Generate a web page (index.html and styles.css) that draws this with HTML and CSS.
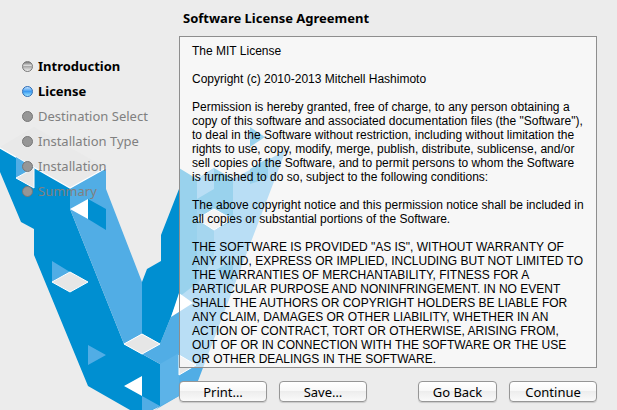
FILE: index.html
```html
<!DOCTYPE html>
<html lang="en">
<head>
<meta charset="utf-8">
<title>Software License Agreement</title>
<link rel="stylesheet" href="styles.css">
</head>
<body>
<svg class="art" width="300" height="290" viewBox="0 120 300 290" aria-hidden="true">
  <path fill="#e9e9e9" d="M0 147L34 127L106 168L70 188Z"/>
  <path fill="#008fd1" d="M0 148L70 188V209L124 344L142 354L160 364V406L152 410H130L88 386L34 255V229L21 222L0 172Z"/>
  <path fill="#51ade5" d="M70 188L106 168V189L142 282V334L124 344L70 209Z"/>
  <path fill="none" stroke="#fff" stroke-width="1.2" d="M0 148L70 188L106 168"/>
  <path fill="#51ade5" d="M16 157L34 168L16 178ZM52 261L70 272L52 282ZM88 345L106 355L88 365ZM142 396L160 406L152 410H142Z"/>
  <path fill="#008fd1" d="M88 199L106 209V230L88 219Z"/>
  <path fill="#fff" d="M70 209L88 199V219ZM124 386L142 376V396Z"/>
  <path fill="#51ade5" d="M179 179L233 179L286 150L198 381L179 396L155 410L160 406V364L142 354L160 344L179 297Z"/>
  <path fill="#008fd1" d="M142 282L147 269L161 261V235L179 189V168L197 179L214 168L233 179V221L214 230V255L197 283L179 297L160 344L142 334Z"/>
  <path fill="#1f9ad8" d="M197 209L214 219V258L197 285Z"/>
  <path fill="#5cb3e8" d="M160 364L179 353V396L160 406Z"/>
  <path fill="#008fd1" d="M250 127L265 137L250 147ZM250 169L268 158V178L250 184ZM216 270L233 260V281Z"/>
  <path fill="#51ade5" d="M197 179V199L214 189V168Z"/>
  <path fill="#e6e6e6" stroke="#fff" d="M16 178L34 168V188ZM52 282L70 272L88 282L70 292ZM124 344L142 334L160 344L142 354ZM197 219L214 209L232 219L214 230ZM179 355L196 365L179 375Z"/>
  <path fill="#fff" d="M179 293L193 303L171 317Z"/>
</svg>
<main class="installer">
  <nav class="sidebar" aria-label="Installation steps">
    <ol class="steps">
      <li class="step done">Introduction</li>
      <li class="step current" aria-current="step">License</li>
      <li class="step">Destination Select</li>
      <li class="step">Installation Type</li>
      <li class="step">Installation</li>
      <li class="step">Summary</li>
    </ol>
  </nav>
  <section class="content">
    <h1 class="title">Software License Agreement</h1>
    <article class="license">
      <p>The MIT License</p>
      <p>Copyright (c) 2010-2013 Mitchell Hashimoto</p>
      <p>Permission is hereby granted, free of charge, to any person obtaining a copy of this software and associated documentation files (the "Software"), to deal in the Software without restriction, including without limitation the rights to use, copy, modify, merge, publish, distribute, sublicense, and/or sell copies of the Software, and to permit persons to whom the Software is furnished to do so, subject to the following conditions:</p>
      <p>The above copyright notice and this permission notice shall be included in all copies or substantial portions of the Software.</p>
      <p>THE SOFTWARE IS PROVIDED "AS IS", WITHOUT WARRANTY OF ANY KIND, EXPRESS OR IMPLIED, INCLUDING BUT NOT LIMITED TO THE WARRANTIES OF MERCHANTABILITY, FITNESS FOR A PARTICULAR PURPOSE AND NONINFRINGEMENT. IN NO EVENT SHALL THE AUTHORS OR COPYRIGHT HOLDERS BE LIABLE FOR ANY CLAIM, DAMAGES OR OTHER LIABILITY, WHETHER IN AN ACTION OF CONTRACT, TORT OR OTHERWISE, ARISING FROM, OUT OF OR IN CONNECTION WITH THE SOFTWARE OR THE USE OR OTHER DEALINGS IN THE SOFTWARE.</p>
    </article>
    <footer class="actions">
      <button class="button" type="button">Print…</button>
      <button class="button" type="button">Save…</button>
      <button class="button back" type="button">Go Back</button>
      <button class="button" type="button">Continue</button>
    </footer>
  </section>
</main>
</body>
</html>
```
FILE: styles.css
```css
* { box-sizing: border-box; }
body {
  margin: 0;
  min-height: 100vh;
  position: relative;
  overflow: hidden;
  background: #ececec;
  color: #000;
  font: 13px/16px "Noto Sans", "Open Sans", sans-serif;
}
.art { position: absolute; left: 0; bottom: 0; }
.installer {
  position: relative;
  display: grid;
  grid-template-columns: 179px 1fr;
  min-height: 100vh;
}
.sidebar { padding: 58px 0 0 22px; }
.steps { list-style: none; margin: 0; padding: 0; display: grid; gap: 9px; }
.step { display: flex; align-items: center; gap: 5px; color: #808080; white-space: nowrap; }
.step::before {
  content: "";
  width: 9px;
  height: 9px;
  border: 1px solid #777;
  border-radius: 50%;
  background: #969696;
}
.done, .current { color: #000; font-weight: bold; }
.done::before { background: linear-gradient(#777, #ddd 40%, #aaa 50%, #eee); }
.current::before { border-color: #2a6bb5; background: linear-gradient(#c4e2ff, #3c9af0 50%, #9be4ff); }
.content { padding: 10px 20px 8px 0; display: flex; flex-direction: column; }
.title { margin: 0 0 10px 4px; font-size: 13px; line-height: 16px; }
.license {
  flex: 1;
  border: 1px solid #8e8e8e;
  background: rgba(255, 255, 255, .6);
  padding: 7px 11px 0 12px;
  font: 12px/14px "Liberation Sans", Arial, sans-serif;
}
.license p { margin: 0 0 14px; }
.license p:last-child { margin: 0; }
.actions { display: flex; gap: 12px; padding-top: 13px; }
.button {
  width: 88px;
  height: 21px;
  padding: 0;
  border: 1px solid #969696;
  border-radius: 4px;
  background: linear-gradient(#fff, #f8f8f8 45%, #ededed 50%, #fafafa);
  box-shadow: 0 1px 1px rgba(0, 0, 0, .15);
  color: #000;
  font: inherit;
}
.back { width: 79px; margin-left: auto; }
```
